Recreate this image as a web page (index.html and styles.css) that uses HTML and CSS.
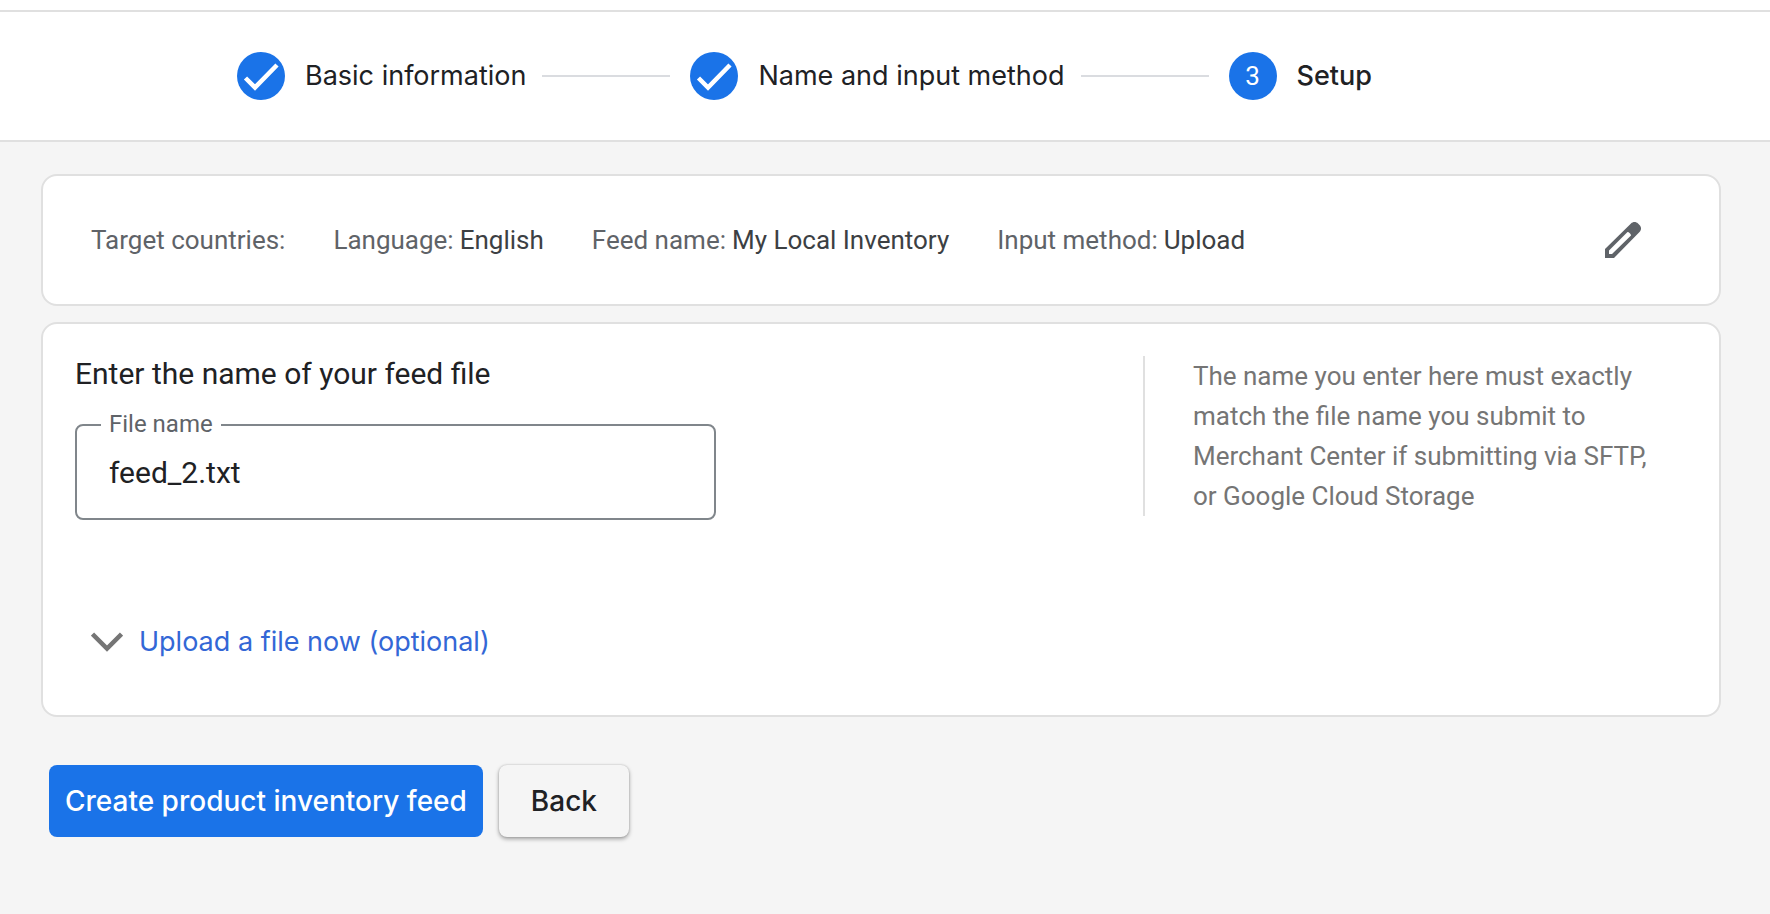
FILE: index.html
```html
<!DOCTYPE html>
<html lang="en">
<head>
<meta charset="utf-8">
<title>Create product inventory feed</title>
<link rel="stylesheet" href="styles.css">
</head>
<body>
<header class="stepper">
  <ol class="steps">
    <li class="step">
      <svg class="step-badge" viewBox="0 0 48 48" aria-hidden="true"><path class="tick" d="M8.500 26l9.500 9.500 22-22.500"/></svg>
      <span>Basic information</span>
    </li>
    <li class="step">
      <svg class="step-badge" viewBox="0 0 48 48" aria-hidden="true"><path class="tick" d="M8.500 26l9.500 9.500 22-22.500"/></svg>
      <span>Name and input method</span>
    </li>
    <li class="step step-current" aria-current="step">
      <span class="step-badge step-number">3</span>
      <span>Setup</span>
    </li>
  </ol>
</header>
<main class="content">
  <section class="card summary">
    <dl class="facts">
      <div class="fact"><dt>Target countries:</dt><dd></dd></div>
      <div class="fact"><dt>Language:</dt><dd>English</dd></div>
      <div class="fact"><dt>Feed name:</dt><dd>My Local Inventory</dd></div>
      <div class="fact"><dt>Input method:</dt><dd>Upload</dd></div>
    </dl>
    <button class="edit" type="button" aria-label="Edit">
      <svg viewBox="0 0 48 48" aria-hidden="true"><path fill-rule="evenodd" d="M6 42v-9L32 7.500c2-2 5-2 7 0l1.500 1.500c2 2 2 5 0 7L15 42zM10 38h3L32 19.500c0-1.500-2-3.500-3.500-3.500L10 34.500z"/></svg>
    </button>
  </section>
  <section class="card setup">
    <div class="setup-row">
      <div class="setup-form">
        <h2 class="title">Enter the name of your feed file</h2>
        <div class="field">
          <label class="field-label" for="file-name">File name</label>
          <input class="field-input" id="file-name" type="text" value="feed_2.txt">
        </div>
      </div>
      <p class="help">The name you enter here must exactly match the file name you submit to Merchant Center if submitting via SFTP, or Google Cloud Storage</p>
    </div>
    <button class="expand" type="button" aria-expanded="false">
      <svg class="chevron" viewBox="0 0 32 20" aria-hidden="true"><path d="M1.500 2L16 16.500 30.500 2"/></svg>
      <span>Upload a file now (optional)</span>
    </button>
  </section>
  <div class="actions">
    <button class="button button-primary" type="button">Create product inventory feed</button>
    <button class="button button-plain" type="button">Back</button>
  </div>
</main>
</body>
</html>
```

FILE: styles.css
```css
* {
  box-sizing: border-box;
}

body {
  margin: 0;
  background: #f5f5f5;
  color: #202124;
  font-family: Roboto, "Liberation Sans", sans-serif;
  font-size: 26px;
}

button,
input {
  font: inherit;
  color: inherit;
}

.stepper {
  padding-top: 10px;
  background: #fff;
  border-bottom: 2px solid #e0e0e0;
}

.steps {
  display: flex;
  margin: 0;
  padding: 40px 237px;
  border-top: 2px solid #e0e0e0;
  list-style: none;
  font-family: Inter, Roboto, sans-serif;
  font-size: 27px;
  line-height: 48px;
  white-space: nowrap;
}

.step {
  display: flex;
  align-items: center;
  gap: 20px;
}

.step:not(:last-child)::after {
  content: "";
  width: 128px;
  height: 2px;
  margin: 0 20px 0 -4px;
  background: #dadce0;
}

.step-current {
  font-weight: 500;
}

.step-badge {
  flex: none;
  width: 48px;
  height: 48px;
  border-radius: 50%;
  background: #1a73e8;
}

.step-number {
  color: #fff;
  font-family: Roboto, sans-serif;
  font-size: 26px;
  font-weight: 400;
  text-align: center;
}

.tick {
  fill: none;
  stroke: #fff;
  stroke-width: 4.500;
}

.content {
  padding: 32px 49px 48px 41px;
}

.card {
  background: #fff;
  border: 2px solid #e0e0e0;
  border-radius: 16px;
}

.summary {
  display: flex;
  align-items: center;
  justify-content: space-between;
  padding: 40px 72px 40px 48px;
}

.facts {
  display: flex;
  gap: 48px;
  margin: 0;
  line-height: 40px;
}

.fact {
  display: flex;
  gap: 6px;
}

.fact:first-child {
  gap: 0;
}

.fact dt {
  color: #5f6368;
}

.fact dd {
  margin: 0;
  color: #3c4043;
}

.edit {
  width: 48px;
  height: 48px;
  padding: 0;
  border: 0;
  background: none;
}

.edit svg {
  display: block;
  fill: #5f6368;
}

.setup {
  margin-top: 16px;
  padding: 32px 32px 53px;
}

.setup-row {
  display: grid;
  grid-template-columns: 53fr 27fr;
  align-items: start;
}

.title {
  margin: 0 0 32px;
  font-size: 30px;
  font-weight: 400;
  line-height: 36px;
}

.field {
  position: relative;
  width: 60%;
}

.field-label {
  position: absolute;
  top: -16px;
  left: 26px;
  padding: 0 8px;
  background: #fff;
  color: #5f6368;
  font-size: 24px;
  line-height: 32px;
}

.field-input {
  display: block;
  width: 100%;
  height: 96px;
  padding: 0 32px;
  border: 2px solid #80868b;
  border-radius: 8px;
  background: #fff;
  font-size: 30px;
}

.help {
  margin: 0;
  padding: 0 32px 0 48px;
  border-left: 2px solid #e0e0e0;
  color: #757575;
  line-height: 40px;
}

.expand {
  display: flex;
  align-items: center;
  gap: 16px;
  margin: 102px 0 0 16px;
  padding: 0;
  border: 0;
  background: none;
  color: #3367d6;
  font-family: Inter, Roboto, sans-serif;
  font-size: 27px;
  line-height: 40px;
}

.chevron {
  width: 32px;
  height: 20px;
  fill: none;
  stroke: #757575;
  stroke-width: 4.500;
}

.actions {
  display: flex;
  gap: 16px;
  margin: 48px 0 0 8px;
}

.button {
  height: 72px;
  padding: 0 16px;
  border: 0;
  border-radius: 8px;
  font-family: Inter, Roboto, sans-serif;
  font-size: 28px;
  font-weight: 500;
}

.button-primary {
  background: #1a73e8;
  color: #fff;
}

.button-plain {
  padding: 0 32px;
  background: #f5f5f5;
  box-shadow: 0 2px 4px rgba(0, 0, 0, .35), 0 0 2px rgba(0, 0, 0, .2);
}
```
